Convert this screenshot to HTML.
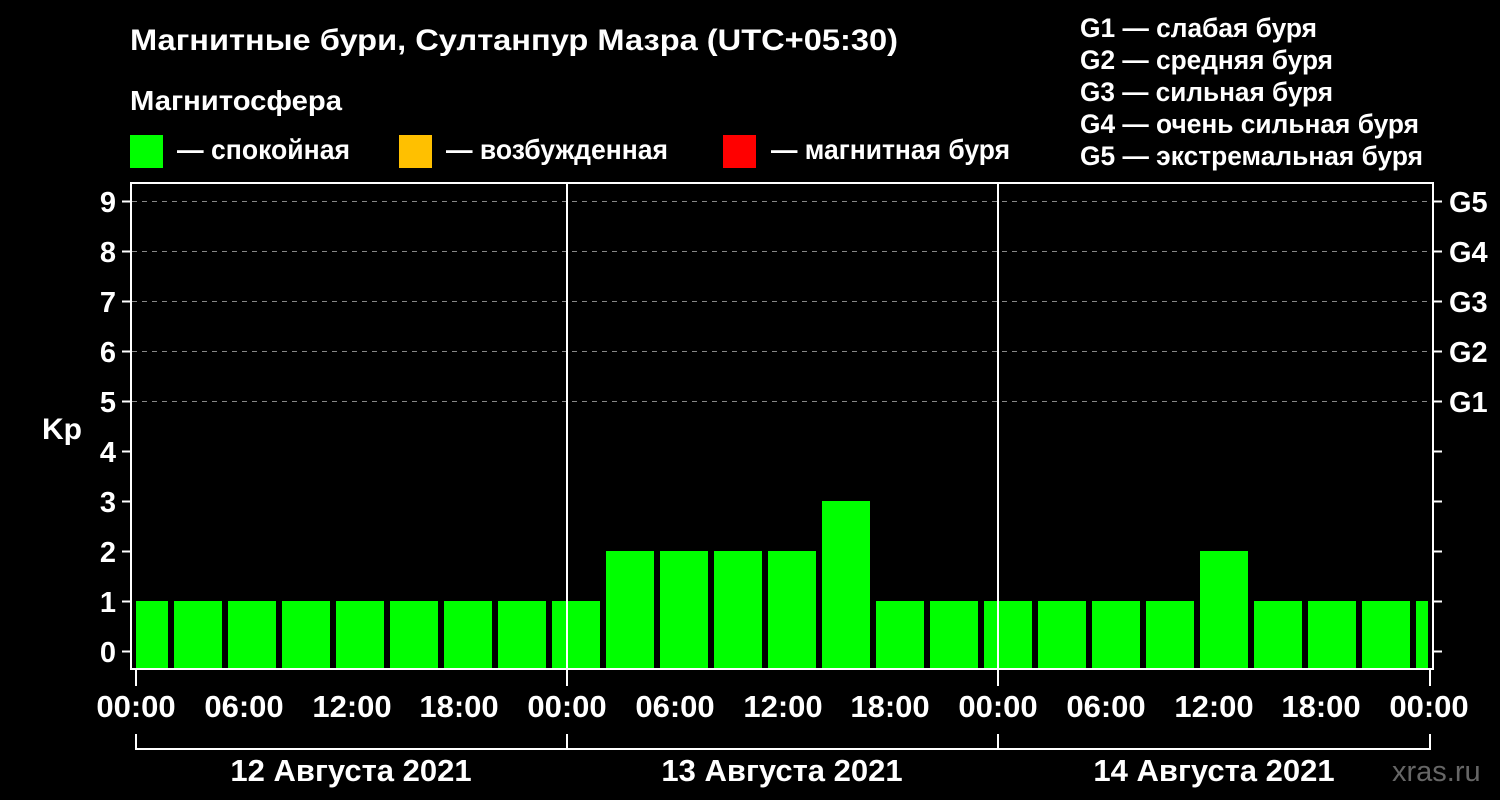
<!DOCTYPE html>
<html><head><meta charset="utf-8"><style>
html,body{margin:0;padding:0;background:#000;width:1500px;height:800px;overflow:hidden}
svg{display:block}
text{font-family:"Liberation Sans",sans-serif;font-weight:bold;fill:#fff}
</style></head><body>
<svg width="1500" height="800" xmlns="http://www.w3.org/2000/svg">
<text x="130" y="50" font-size="30" textLength="768" lengthAdjust="spacingAndGlyphs">Магнитные бури, Султанпур Мазра (UTC+05:30)</text>
<text x="130" y="110" font-size="28" textLength="212" lengthAdjust="spacingAndGlyphs">Магнитосфера</text>
<rect x="130" y="135" width="33" height="33" fill="#00ff00"/>
<text x="177" y="159" font-size="28" textLength="173" lengthAdjust="spacingAndGlyphs">— спокойная</text>
<rect x="399" y="135" width="33" height="33" fill="#ffc000"/>
<text x="446" y="159" font-size="28" textLength="222" lengthAdjust="spacingAndGlyphs">— возбужденная</text>
<rect x="723" y="135" width="33" height="33" fill="#ff0000"/>
<text x="771" y="159" font-size="28" textLength="239" lengthAdjust="spacingAndGlyphs">— магнитная буря</text>
<g font-size="27">
<text x="1080" y="37" textLength="237" lengthAdjust="spacingAndGlyphs">G1 — слабая буря</text>
<text x="1080" y="69" textLength="253" lengthAdjust="spacingAndGlyphs">G2 — средняя буря</text>
<text x="1080" y="101" textLength="253" lengthAdjust="spacingAndGlyphs">G3 — сильная буря</text>
<text x="1080" y="133" textLength="339" lengthAdjust="spacingAndGlyphs">G4 — очень сильная буря</text>
<text x="1080" y="165" textLength="343" lengthAdjust="spacingAndGlyphs">G5 — экстремальная буря</text>
</g>
<g stroke="#888" stroke-width="1" stroke-dasharray="5,5">
<line x1="132" y1="201.5" x2="1432" y2="201.5"/>
<line x1="132" y1="251.5" x2="1432" y2="251.5"/>
<line x1="132" y1="301.5" x2="1432" y2="301.5"/>
<line x1="132" y1="351.5" x2="1432" y2="351.5"/>
<line x1="132" y1="401.5" x2="1432" y2="401.5"/>
</g>
<g fill="#00ff00">
<rect x="136" y="601" width="32" height="67"/>
<rect x="174" y="601" width="48" height="67"/>
<rect x="228" y="601" width="48" height="67"/>
<rect x="282" y="601" width="48" height="67"/>
<rect x="336" y="601" width="48" height="67"/>
<rect x="390" y="601" width="48" height="67"/>
<rect x="444" y="601" width="48" height="67"/>
<rect x="498" y="601" width="48" height="67"/>
<rect x="552" y="601" width="48" height="67"/>
<rect x="606" y="551" width="48" height="117"/>
<rect x="660" y="551" width="48" height="117"/>
<rect x="714" y="551" width="48" height="117"/>
<rect x="768" y="551" width="48" height="117"/>
<rect x="822" y="501" width="48" height="167"/>
<rect x="876" y="601" width="48" height="67"/>
<rect x="930" y="601" width="48" height="67"/>
<rect x="984" y="601" width="48" height="67"/>
<rect x="1038" y="601" width="48" height="67"/>
<rect x="1092" y="601" width="48" height="67"/>
<rect x="1146" y="601" width="48" height="67"/>
<rect x="1200" y="551" width="48" height="117"/>
<rect x="1254" y="601" width="48" height="67"/>
<rect x="1308" y="601" width="48" height="67"/>
<rect x="1362" y="601" width="48" height="67"/>
<rect x="1416" y="601" width="12" height="67"/>
</g>
<g stroke="#fff" stroke-width="2" fill="none">
<rect x="131" y="183" width="1302" height="486"/>
<line x1="567" y1="183" x2="567" y2="669"/>
<line x1="998" y1="183" x2="998" y2="669"/>
<path d="M122 201.5h9M122 251.5h9M122 301.5h9M122 351.5h9M122 401.5h9M122 451.5h9M122 501.5h9M122 551.5h9M122 601.5h9M122 651.5h9"/>
<path d="M1433 201.5h9M1433 251.5h9M1433 301.5h9M1433 351.5h9M1433 401.5h9M1433 451.5h9M1433 501.5h9M1433 551.5h9M1433 601.5h9M1433 651.5h9"/>
<path d="M136 669v17M567 669v17M998 669v17M1430 669v17"/>
<path d="M135 749h1296M136 734v16M567 734v16M998 734v16M1430 734v16"/>
</g>
<g font-size="29" text-anchor="end">
<text x="116" y="212">9</text><text x="116" y="262">8</text><text x="116" y="312">7</text><text x="116" y="362">6</text><text x="116" y="412">5</text><text x="116" y="462">4</text><text x="116" y="512">3</text><text x="116" y="562">2</text><text x="116" y="612">1</text><text x="116" y="662">0</text>
</g>
<text x="42" y="439" font-size="30">Kp</text>
<g font-size="29">
<text x="1449" y="212">G5</text><text x="1449" y="262">G4</text><text x="1449" y="312">G3</text><text x="1449" y="362">G2</text><text x="1449" y="412">G1</text>
</g>
<g font-size="31" text-anchor="middle">
<text x="136" y="717">00:00</text><text x="244" y="717">06:00</text><text x="352" y="717">12:00</text><text x="459" y="717">18:00</text>
<text x="567" y="717">00:00</text><text x="675" y="717">06:00</text><text x="783" y="717">12:00</text><text x="890" y="717">18:00</text>
<text x="998" y="717">00:00</text><text x="1106" y="717">06:00</text><text x="1214" y="717">12:00</text><text x="1321" y="717">18:00</text>
<text x="1429" y="717">00:00</text>
<text x="351" y="781">12 Августа 2021</text>
<text x="782" y="781">13 Августа 2021</text>
<text x="1214" y="781">14 Августа 2021</text>
</g>
<text x="1392" y="781" font-size="29" style="fill:#666;font-weight:normal">xras.ru</text>
</svg>
</body></html>
